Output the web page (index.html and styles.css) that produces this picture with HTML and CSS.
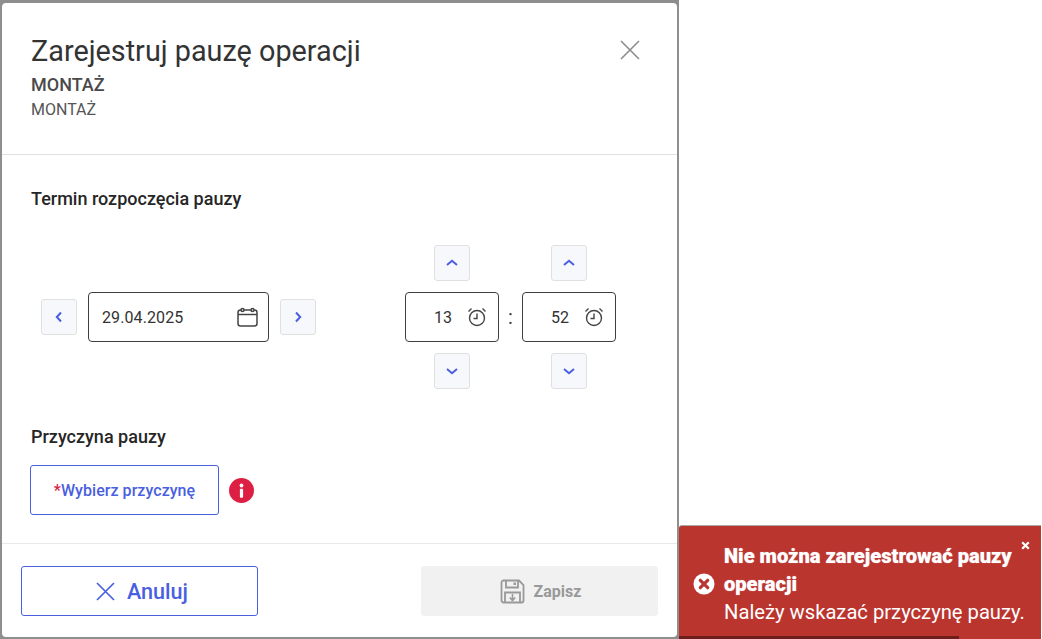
FILE: index.html
```html
<!DOCTYPE html>
<html lang="pl">
<head>
<meta charset="utf-8">
<title>Zarejestruj pauzę operacji</title>
<link rel="stylesheet" href="styles.css">
</head>
<body>
<div class="backdrop">
  <main class="dialog">
    <header class="head">
      <div class="head-text">
        <h1 class="title">Zarejestruj pauzę operacji</h1>
        <div class="sub-strong">MONTAŻ</div>
        <div class="sub">MONTAŻ</div>
      </div>
      <button class="close" aria-label="Zamknij">
        <svg width="20" height="20" viewBox="0 0 20 20"><path d="M1 1l18 18M19 1L1 19" stroke="#8c8c8c" stroke-width="1.6" fill="none"/></svg>
      </button>
    </header>
    <section class="body">
      <h2 class="label">Termin rozpoczęcia pauzy</h2>
      <div class="pickers">
        <div class="date-group">
          <button class="step"><svg width="12" height="12" viewBox="0 0 12 12"><path d="M8 1.500L3.800 6 8 10.500" class="chev"/></svg></button>
          <div class="field date-field">
            <span>29.04.2025</span>
            <svg width="21" height="20" viewBox="0 0 21 20" fill="none" stroke="#444" stroke-width="1.500"><rect x="1" y="3" width="19" height="16" rx="2.500"/><path d="M1 7.500h19"/><circle cx="5.500" cy="3" r="1.500" fill="#fff"/><circle cx="15.500" cy="3" r="1.500" fill="#fff"/></svg>
          </div>
          <button class="step"><svg width="12" height="12" viewBox="0 0 12 12"><path d="M4 1.500L8.200 6 4 10.500" class="chev"/></svg></button>
        </div>
        <div class="time-group">
          <div class="time-col">
            <button class="step"><svg width="12" height="12" viewBox="0 0 12 12"><path d="M1 8l5-4.200L11 8" class="chev"/></svg></button>
            <div class="field time-field">
              <span>13</span>
              <svg width="20" height="20" viewBox="0 0 20 20" fill="none" stroke="#444" stroke-width="1.400"><circle cx="10" cy="11" r="7.500"/><path d="M10 6.500V11.500H6.500M1.500 4.500L4.500 1.500M18.500 4.500L15.500 1.500"/></svg>
            </div>
            <button class="step"><svg width="12" height="12" viewBox="0 0 12 12"><path d="M1 4l5 4.200L11 4" class="chev"/></svg></button>
          </div>
          <span class="colon">:</span>
          <div class="time-col">
            <button class="step"><svg width="12" height="12" viewBox="0 0 12 12"><path d="M1 8l5-4.200L11 8" class="chev"/></svg></button>
            <div class="field time-field">
              <span>52</span>
              <svg width="20" height="20" viewBox="0 0 20 20" fill="none" stroke="#444" stroke-width="1.400"><circle cx="10" cy="11" r="7.500"/><path d="M10 6.500V11.500H6.500M1.500 4.500L4.500 1.500M18.500 4.500L15.500 1.500"/></svg>
            </div>
            <button class="step"><svg width="12" height="12" viewBox="0 0 12 12"><path d="M1 4l5 4.200L11 4" class="chev"/></svg></button>
          </div>
        </div>
      </div>
      <h2 class="label reason-label">Przyczyna pauzy</h2>
      <div class="reason-row">
        <button class="reason"><span class="req">*</span>Wybierz przyczynę</button>
        <svg class="info" width="25" height="25" viewBox="0 0 25 25"><circle cx="12.500" cy="12.500" r="12.500" fill="#dc1f42"/><circle cx="12.500" cy="7.500" r="1.900" fill="#fff"/><rect x="10.900" y="10.800" width="3.200" height="9" rx="0.800" fill="#fff"/></svg>
      </div>
    </section>
    <footer class="foot">
      <button class="btn cancel">
        <svg width="19" height="19" viewBox="0 0 19 19"><path d="M1 1l17 17M18 1L1 18" stroke="#4a5fe0" stroke-width="1.700" fill="none"/></svg>
        Anuluj
      </button>
      <button class="btn save">
        <svg width="25" height="25" viewBox="0 0 25 25" fill="none" stroke="#999" stroke-width="1.800"><path d="M3 1.500h16l4.500 4.500v15.500a2 2 0 0 1-2 2h-18a2 2 0 0 1-2-2v-18a2 2 0 0 1 2-2z"/><path d="M6 1.500v7h12v-7M5 23.500v-10h15v10"/><path d="M12.500 15v6M9.800 18.500l2.700 3 2.700-3" stroke-width="1.600"/><rect x="13.500" y="3.500" width="2.500" height="2.500" fill="#999" stroke="none"/></svg>
        Zapisz
      </button>
    </footer>
  </main>
</div>
<aside class="toast">
  <svg class="toast-icon" width="22" height="22" viewBox="0 0 22 22"><circle cx="11" cy="11" r="10.500" fill="#fff"/><path d="M7.300 7.300l7.400 7.400M14.700 7.300l-7.400 7.400" stroke="#bb352f" stroke-width="3.200" stroke-linecap="round"/></svg>
  <div class="toast-text">
    <div class="toast-title">Nie można zarejestrować pauzy operacji</div>
    <div class="toast-msg">Należy wskazać przyczynę pauzy.</div>
  </div>
  <svg class="toast-close" width="9" height="9" viewBox="0 0 9 9"><path d="M1.200 1.200l6.600 6.600M7.800 1.200L1.200 7.800" stroke="#fff" stroke-width="2.200"/></svg>
  <div class="toast-bar"></div>
</aside>
</body>
</html>
```
FILE: styles.css
```css
* { box-sizing: border-box; }
html, body { margin: 0; padding: 0; }
body {
  width: 1042px;
  height: 639px;
  overflow: hidden;
  background: #fff;
  font-family: Roboto, "Liberation Sans", sans-serif;
  color: #333;
  position: relative;
}
button { font-family: inherit; padding: 0; cursor: pointer; }
.backdrop {
  width: 679px;
  height: 639px;
  padding: 3px 2px 2px 2px;
  background: #8e8e8e;
}
.dialog {
  width: 675px;
  height: 634px;
  background: #fff;
  border-radius: 4px;
  display: flex;
  flex-direction: column;
}
.head {
  height: 152px;
  flex: none;
  padding: 29px 37px 0 29px;
  border-bottom: 1px solid #e0e0e0;
  display: flex;
  justify-content: space-between;
  align-items: flex-start;
}
.title {
  margin: 0;
  font-size: 28.8px;
  font-weight: 400;
  line-height: 38px;
  color: #333;
}
.sub-strong {
  font-size: 18px;
  font-weight: 500;
  line-height: 24px;
  margin-top: 3px;
  color: #4a4a4a;
}
.sub {
  font-size: 16px;
  line-height: 22px;
  margin-top: 2px;
  color: #555;
}
.close {
  border: 0;
  background: none;
  width: 20px;
  height: 20px;
  margin-top: 8px;
  line-height: 0;
}
.body {
  flex: 1;
  padding: 33px 0 0 29px;
}
.label {
  margin: 0;
  font-size: 18px;
  font-weight: 500;
  line-height: 22px;
  color: #262626;
}
.pickers {
  margin-top: 35px;
  padding: 0 61px 0 10px;
  display: flex;
  justify-content: space-between;
  align-items: center;
}
.date-group { display: flex; align-items: center; gap: 11px; }
.step {
  width: 36px;
  height: 36px;
  background: #f7f8fb;
  border: 1px solid #e0e0e0;
  border-radius: 3px;
  display: flex;
  align-items: center;
  justify-content: center;
  flex: none;
}
.chev { fill: none; stroke: #4a5fe0; stroke-width: 2; }
.field {
  height: 50px;
  border: 1px solid #3f3f3f;
  border-radius: 4px;
  display: flex;
  align-items: center;
  font-size: 16px;
  letter-spacing: 0.1px;
  color: #333;
  background: #fff;
}
.date-field {
  width: 181px;
  padding: 0 10px 0 13px;
  justify-content: space-between;
}
.time-group { display: flex; align-items: center; gap: 8px; }
.time-col { display: flex; flex-direction: column; align-items: center; gap: 11px; }
.time-field {
  width: 94px;
  padding: 0 11px 0 28px;
  justify-content: space-between;
}
.colon { width: 7px; text-align: center; font-size: 20px; font-weight: 400; color: #444; }
.reason-label { margin-top: 37px; }
.reason-row {
  margin-top: 17px;
  display: flex;
  align-items: center;
  gap: 10px;
}
.reason {
  width: 189px;
  height: 50px;
  margin-left: -1px;
  border: 1px solid #4a5fe0;
  border-radius: 3px;
  background: #fff;
  color: #4a5fe0;
  font-size: 16px;
  font-weight: 500;
  letter-spacing: 0.05px;
}
.req { color: #d81e4a; }
.info { flex: none; }
.foot {
  height: 94px;
  flex: none;
  border-top: 1px solid #e8e8e8;
  padding: 22px 19px 0 19px;
  display: flex;
  justify-content: space-between;
  align-items: flex-start;
}
.btn {
  width: 237px;
  height: 50px;
  border-radius: 3px;
  display: flex;
  align-items: center;
  justify-content: center;
}
.cancel {
  border: 1px solid #4a5fe0;
  background: #fff;
  color: #4a5fe0;
  font-size: 21.600px;
  font-weight: 500;
  gap: 12px;
  padding-left: 5px;
}
.save {
  border: 0;
  background: #f1f1f1;
  color: #999;
  font-size: 16px;
  font-weight: 700;
  gap: 9px;
  padding-left: 2px;
}
.toast {
  position: absolute;
  left: 679px;
  top: 525px;
  width: 362px;
  height: 114px;
  background: #bb352f;
  border-top: 1px solid #a8a8a8;
  color: #fff;
  display: flex;
  align-items: center;
  padding: 4px 14px 0 14px;
  gap: 9px;
  border-radius: 3px 0 0 0;
}
.toast-icon { flex: none; margin-top: -2px; }
.toast-title {
  font-size: 20.100px;
  font-weight: 900;
  line-height: 28px;
  text-shadow: 0 0 1px rgba(255, 255, 255, 0.6);
}
.toast-msg { font-size: 20.200px; line-height: 29px; }
.toast-close { position: absolute; top: 15px; right: 11px; }
.toast-bar {
  position: absolute;
  left: 0;
  bottom: 0;
  width: 280px;
  height: 3px;
  background: #6f1f1b;
}
```
